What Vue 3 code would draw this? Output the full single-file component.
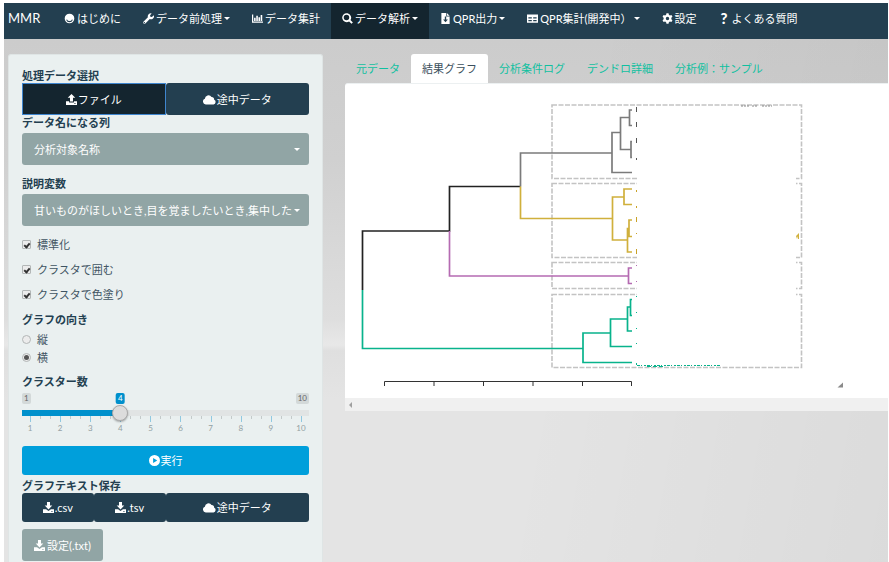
<script setup>
import { ref, computed } from 'vue'

const icons = {
  smile: 'M8 1a7 7 0 1 0 0 14A7 7 0 0 0 8 1zM3.500 9.500h1a3.600 3 0 0 0 7 0h1a4.500 4 0 0 1-9 0z',
  wrench: 'M15.800 3.400l-2.900 2.300-2.200-.4-.4-2.200 2.300-2.400A4.500 4.500 0 0 0 7.100 6.300L.6 12.600a2 2 0 0 0 2.800 2.800l6.500-6.500a4.500 4.500 0 0 0 5.900-5.500zM2 15a1 1 0 1 1 0-2 1 1 0 0 1 0 2z',
  chart: 'M0 2h1.800v10.500H16V14H0zM3 7h2.300v4.500H3zM6.200 4h2.300v7.500H6.200zM9.400 6h2.300v5.500H9.400zM12.600 3h2.300v8.500h-2.300z',
  search: 'M15.800 13.800l-3.500-3.500a6.500 6.500 0 1 0-2 2l3.500 3.500zM6.500 10.500a4 4 0 1 1 0-8 4 4 0 0 1 0 8z',
  file: 'M2 0h7v5h5v11H2zM10 0l4 4h-4zM7 5v4.500H4.500L8 13.500l3.500-4H9V5z',
  table: 'M0 2h16v12H0zM2 6v2h5V6zM9 6v2h5V6zM2 10v2h5v-2zM9 10v2h5v-2z',
  cog: 'M6.500.5h3l.5 2.200 1.500.8 2.200-.7 1.500 2.600-1.600 1.600v2l1.600 1.600-1.500 2.600-2.200-.7-1.500.8-.5 2.200h-3L6 13.300l-1.500-.8-2.200.7L.8 10.600 2.400 9V7L.8 5.400l1.500-2.600 2.200.7L6 2.700zM8 5.500a2.500 2.500 0 1 0 0 5 2.500 2.500 0 0 0 0-5z',
  upload: 'M8 0l5.500 5.500h-3.300V11H5.800V5.500H2.500zM0 10.500h4.500v2h7v-2H16V16H0zM12 13.500v1.200h2v-1.200z',
  download: 'M5.800 0h4.400v5h3.300L8 10.800 2.500 5h3.300zM0 10.500h4.500l3.500 2.500 3.500-2.500H16V16H0zM12 13.500v1.200h2v-1.200z',
  cloud: 'M3.500 14A3.500 3.500 0 0 1 2.300 7.200a4.500 4.500 0 0 1 8.200-2.400 3 3 0 0 1 3.200 3.500A3 3 0 0 1 13 14z',
  play: 'M8 0a8 8 0 1 0 0 16A8 8 0 0 0 8 0zM6 4.200l6 3.800-6 3.800z'
}

const nav = [
  { icon: 'smile', text: 'はじめに' },
  { icon: 'wrench', text: 'データ前処理', menu: true },
  { icon: 'chart', text: 'データ集計' },
  { icon: 'search', text: 'データ解析', menu: true, active: true },
  { icon: 'file', text: 'QPR出力', menu: true },
  { icon: 'table', text: 'QPR集計(開発中）', menu: true },
  { icon: 'cog', text: '設定' },
  { mark: '?', text: 'よくある質問' }
]

const tabs = ['元データ', '結果グラフ', '分析条件ログ', 'デンドロ詳細', '分析例：サンプル']
const activeTab = ref(1)

const checks = ref([
  { id: 'standardize', text: '標準化', on: true },
  { id: 'enclose', text: 'クラスタで囲む', on: true },
  { id: 'paint', text: 'クラスタで色塗り', on: true }
])
const direction = ref('横')
const clusters = ref(4)
const ratio = computed(() => (clusters.value - 1) / 9)

const branches = [
  { color: '#222222', d: 'M362.500 290V231H449.500V186.500H520.500' },
  { color: '#7b7b7b', d: 'M520.500 186.500V153H612M620.500 132.500H612V172.500H632M629.500 117.500H620.500V149.500H631M632 110H629.500V125.500H632M632 141.500H631V157.500H632' },
  { color: '#d0b03c', d: 'M520.500 186.500V218.500H612.500M624 197H612.500V240H627.500M632 189H624V204.500H632M629 228.500H627.500V252H632M632 220H629V236.500H632' },
  { color: '#b56bb2', d: 'M449.500 231V276H628.500M632 268H628.500V283.500H632' },
  { color: '#08b38c', d: 'M362.500 290V348.500H583M610.500 333H583V362.500H632M627.500 319H610.500V346.500H632M630.500 307H627.500V331H632M632 299.500H630.500V315.500H632' }
]
const frames = [
  { y: 105, h: 73.500 },
  { y: 183.500, h: 74 },
  { y: 262.500, h: 26 },
  { y: 294.500, h: 73 }
]
const specks = [
  { color: '#555', d: 'M636.500 107v5M636.500 122v5M636.500 138v5M636.500 158v2' },
  { color: '#c9a227', d: 'M636.500 190v2M636.500 206v2M636.500 217v5M636.500 233v1M636.500 249v5' },
  { color: '#b56bb2', d: 'M636.500 265v1M636.500 281v1' },
  { color: '#08b38c', d: 'M636.500 296v1M636.500 312v1M636.500 328v1M636.500 343v1M636.500 363v2' }
]
</script>

<template>
  <div class="page">
    <nav class="navbar">
      <a class="brand" href="#">MMR</a>
      <a v-for="n in nav" :key="n.text" href="#" class="nav-link" :class="{ active: n.active }">
        <svg v-if="n.icon" class="icon" viewBox="0 0 16 16"><path :d="icons[n.icon]" fill-rule="evenodd" /></svg>
        <b v-else class="mark">{{ n.mark }}</b>
        <span>{{ n.text }}</span>
        <i v-if="n.menu" class="caret"></i>
      </a>
    </nav>

    <main class="body">
      <form class="sidebar" @submit.prevent>
        <h2 class="label">処理データ選択</h2>
        <div class="group two">
          <button type="button" class="btn dark pressed">
            <svg class="icon" viewBox="0 0 16 16"><path :d="icons.upload" fill-rule="evenodd" /></svg>ファイル
          </button>
          <button type="button" class="btn dark">
            <svg class="icon wide" viewBox="0 0 16 16"><path :d="icons.cloud" /></svg>途中データ
          </button>
        </div>

        <label class="label spaced" for="name-column">データ名になる列</label>
        <div class="picker">
          <select id="name-column"><option>分析対象名称</option></select>
          <i class="caret"></i>
        </div>

        <label class="label spaced" for="variables">説明変数</label>
        <div class="picker">
          <select id="variables"><option>甘いものがほしいとき,目を覚ましたいとき,集中した</option></select>
          <i class="caret"></i>
        </div>

        <div class="checks">
          <label v-for="c in checks" :key="c.id" class="option">
            <input :id="c.id" v-model="c.on" type="checkbox" />{{ c.text }}
          </label>
        </div>

        <fieldset class="radios">
          <legend class="label spaced">グラフの向き</legend>
          <label v-for="d in ['縦', '横']" :key="d" class="option tall">
            <input v-model="direction" type="radio" name="direction" :value="d" />{{ d }}
          </label>
        </fieldset>

        <label class="label spaced" for="clusters">クラスター数</label>
        <div class="slider" :style="{ '--ratio': ratio }">
          <div class="bounds">
            <span class="badge">1</span>
            <span class="badge">10</span>
            <span class="rail"><output class="badge current" for="clusters">{{ clusters }}</output></span>
          </div>
          <input id="clusters" v-model.number="clusters" type="range" min="1" max="10" />
          <div class="ticks"><i v-for="t in 28" :key="t" :class="{ major: t % 3 === 1 }"></i></div>
          <div class="numbers"><span v-for="t in 10" :key="t">{{ t }}</span></div>
        </div>

        <button type="button" class="btn run">
          <svg class="icon" viewBox="0 0 16 16"><path :d="icons.play" fill-rule="evenodd" /></svg>実行
        </button>

        <h2 class="label save">グラフテキスト保存</h2>
        <div class="group three">
          <button type="button" class="btn dark">
            <svg class="icon" viewBox="0 0 16 16"><path :d="icons.download" fill-rule="evenodd" /></svg>.csv
          </button>
          <button type="button" class="btn dark">
            <svg class="icon" viewBox="0 0 16 16"><path :d="icons.download" fill-rule="evenodd" /></svg>.tsv
          </button>
          <button type="button" class="btn dark">
            <svg class="icon wide" viewBox="0 0 16 16"><path :d="icons.cloud" /></svg>途中データ
          </button>
        </div>
        <button type="button" class="btn settings">
          <svg class="icon" viewBox="0 0 16 16"><path :d="icons.download" fill-rule="evenodd" /></svg>設定(.txt)
        </button>
      </form>

      <section class="results">
        <div class="tabs" role="tablist">
          <button
            v-for="(t, i) in tabs"
            :key="t"
            type="button"
            role="tab"
            class="tab"
            :class="{ active: i === activeTab }"
            :aria-selected="i === activeTab"
            @click="activeTab = i"
          >{{ t }}</button>
        </div>
        <div class="panel">
          <svg class="plot" width="499" height="305" viewBox="345 84 499 305">
            <rect
              v-for="f in frames"
              :key="f.y"
              x="552"
              :y="f.y"
              width="249.500"
              :height="f.h"
              fill="none"
              stroke="#c3c3c3"
              stroke-width="1.600"
              stroke-dasharray="5 1.500"
            />
            <path v-for="b in branches" :key="b.color" :d="b.d" :stroke="b.color" fill="none" stroke-width="1.700" />
            <rect x="637" y="107" width="159" height="259" fill="#fff" />
            <path v-for="s in specks" :key="s.color" :d="s.d" :stroke="s.color" fill="none" />
            <path d="M741 106h8M752 106h6M762 106h10" stroke="#888" stroke-dasharray="2 1" />
            <path d="M637 365.500h84" stroke="#08b38c" stroke-dasharray="3 1 1 2 2 1" />
            <path d="M647 366.500h16" stroke="#08b38c" stroke-dasharray="4 2" />
            <path d="M796 236l3-3v6h-1v-3l-1 3z" fill="#d0b03c" />
            <path
              d="M384.500 386V381.500H631.500V386M434 381.500V386M483.500 381.500V386M533 381.500V386M582.500 381.500V386"
              fill="none"
              stroke="#333"
            />
            <path d="M837.500 387.500l5.500-5v5z" fill="#8a8a8a" />
          </svg>
          <div class="scrollbar"><i></i></div>
        </div>
      </section>
    </main>
  </div>
</template>

<style>
body {
  margin: 0;
  background: #fff;
}
</style>

<style scoped>
.page {
  box-sizing: border-box;
  min-height: 100vh;
  padding: 3px 1px 0 4px;
  display: flex;
  flex-direction: column;
  font-family: Lato, "Noto Sans CJK JP", sans-serif;
  font-size: 11px;
  line-height: 15px;
  color: #3f5462;
}
.icon {
  width: 11px;
  height: 11px;
  flex: none;
  fill: currentColor;
}
.icon.wide {
  width: 13px;
  height: 13px;
}
.caret {
  flex: none;
  border: 3px solid transparent;
  border-top-color: currentColor;
  border-bottom: 0;
}
.navbar {
  display: flex;
  height: 36px;
  background: #233f50;
}
.brand {
  box-sizing: border-box;
  width: 49px;
  padding: 8px 0 0 4px;
  font-size: 13px;
  color: #fff;
  text-decoration: none;
}
.nav-link {
  display: flex;
  align-items: center;
  gap: 2px;
  padding: 0 11px 6px;
  color: #fff;
  text-decoration: none;
  white-space: nowrap;
}
.nav-link.active {
  background: #14252f;
}
.mark {
  width: 11px;
  font-size: 15px;
  font-weight: 900;
  text-align: center;
}
.body {
  flex: 1;
  display: grid;
  grid-template-columns: minmax(0, 315fr) minmax(0, 543fr);
  gap: 22px;
  padding: 15px 0 0 4px;
  background:
    linear-gradient(100deg, transparent 60%, rgba(0, 0, 0, 0.04)),
    linear-gradient(#cccccc, #d0d0d0 120px, #dedede 280px, #e8e8e8 306px, #dfdfdf 312px, #e4e4e4 360px, #e4e4e4);
}
.sidebar {
  padding: 13px 13px 0;
  border: 1px solid #dfe5e5;
  border-bottom: 0;
  border-radius: 3px 3px 0 0;
  background: #eaf0f0;
}
.label {
  display: block;
  margin: 0;
  padding: 0;
  font-size: 11px;
  font-weight: 700;
  line-height: 15px;
  color: #233f50;
}
.spaced {
  margin-bottom: 3px;
}
.btn {
  display: flex;
  align-items: center;
  justify-content: center;
  gap: 1px;
  margin: 0;
  padding: 0;
  border: 0;
  border-radius: 3px;
  font: inherit;
  color: #fff;
}
.group {
  display: grid;
}
.two {
  grid-template-columns: 1fr 1fr;
}
.two .btn {
  height: 32px;
}
.three {
  grid-template-columns: 1fr 1fr 2fr;
}
.three .btn {
  height: 29px;
}
.dark {
  background: #233f50;
}
.pressed {
  background: #14252f;
  border: 1px solid #0c161c;
  outline: 1px solid #3f86cf;
  outline-offset: -1px;
  border-radius: 0;
}
.picker {
  display: grid;
  align-items: center;
  margin-bottom: 11px;
}
.picker > * {
  grid-area: 1 / 1;
}
.picker .caret {
  justify-self: end;
  margin-right: 9px;
  color: #fff;
  pointer-events: none;
}
.picker select {
  appearance: none;
  width: 100%;
  height: 32px;
  padding: 0 16px 0 12px;
  border: 0;
  border-radius: 3px;
  background: #91a5a5;
  font: inherit;
  color: #fff;
}
.checks {
  display: grid;
  gap: 10px;
  margin-bottom: 10px;
}
.option {
  display: flex;
  align-items: center;
  gap: 6px;
}
.option.tall {
  height: 18px;
}
.option input {
  appearance: none;
  box-sizing: border-box;
  display: grid;
  place-items: center;
  width: 9px;
  height: 9px;
  margin: 0;
  border: 1px solid #b3b7b7;
  border-radius: 1px;
  background: #ececec;
}
.option input[type="checkbox"]:checked::before {
  content: "";
  width: 2px;
  height: 4px;
  border: solid #333;
  border-width: 0 2px 2px 0;
  transform: rotate(40deg);
}
.option input[type="radio"] {
  border-radius: 50%;
}
.option input[type="radio"]:checked::before {
  content: "";
  width: 5px;
  height: 5px;
  border-radius: 50%;
  background: #555;
}
.radios {
  margin: 0 0 8px;
  padding: 0;
  border: 0;
}
.slider {
  margin-bottom: 12px;
  font-size: 8px;
  line-height: 11px;
}
.bounds {
  position: relative;
  display: flex;
  justify-content: space-between;
  padding-top: 1px;
}
.badge {
  padding: 0 2px;
  border-radius: 2px;
  background: #d3d9d9;
  color: #666;
}
.rail {
  position: absolute;
  top: 1px;
  left: 8px;
  right: 8px;
  height: 11px;
}
.current {
  position: absolute;
  left: calc(100% * var(--ratio));
  transform: translateX(-50%);
  background: #0090cc;
  color: #fff;
}
.slider input {
  appearance: none;
  position: relative;
  display: block;
  width: 100%;
  height: 16px;
  margin: 1px 0 0;
  border-radius: 3px;
  background: linear-gradient(90deg, #0090cc calc(8px + (100% - 16px) * var(--ratio)), #e1e4e4 0) center / 100% 6px no-repeat;
}
.slider input::-webkit-slider-thumb {
  appearance: none;
  box-sizing: border-box;
  width: 16px;
  height: 16px;
  border: 1px solid #aaa;
  border-radius: 50%;
  background: #dcdcdc;
  box-shadow: 0 1px 2px rgba(0, 0, 0, 0.3);
}
.ticks,
.numbers {
  display: flex;
  justify-content: space-between;
  padding: 0 8px;
}
.ticks {
  height: 7px;
  margin-top: -5px;
}
.ticks i {
  width: 1px;
  height: 3px;
  margin-right: -1px;
  background: #c3caca;
}
.ticks .major {
  height: 6px;
  background: #90c8e0;
}
.numbers {
  color: #93a1a3;
}
.numbers span {
  display: flex;
  justify-content: center;
  width: 0;
}
.run {
  width: 100%;
  height: 29px;
  background: #009fdb;
}
.save {
  margin-top: 3px;
}
.settings {
  margin-top: 7px;
  height: 32px;
  padding: 0 12px;
  gap: 2px;
  background: #91a5a5;
}
.tabs {
  display: flex;
}
.tab {
  height: 29px;
  padding: 0 11px;
  border: 0;
  border-radius: 3px 3px 0 0;
  background: none;
  font: inherit;
  color: #10c0a0;
  white-space: nowrap;
}
.tab.active {
  background: #fff;
  color: #3b4f5c;
}
.panel {
  border-top: 1px solid #ecf0f1;
  border-radius: 3px 0 0 0;
  background: #fff;
  overflow: hidden;
}
.plot {
  display: block;
  margin-bottom: 9px;
}
.scrollbar {
  display: flex;
  align-items: center;
  height: 13px;
  padding-left: 4px;
  background: #f0f0f0;
}
.scrollbar i {
  border: 3px solid transparent;
  border-right-color: #a0a0a0;
  border-left: 0;
}
</style>
